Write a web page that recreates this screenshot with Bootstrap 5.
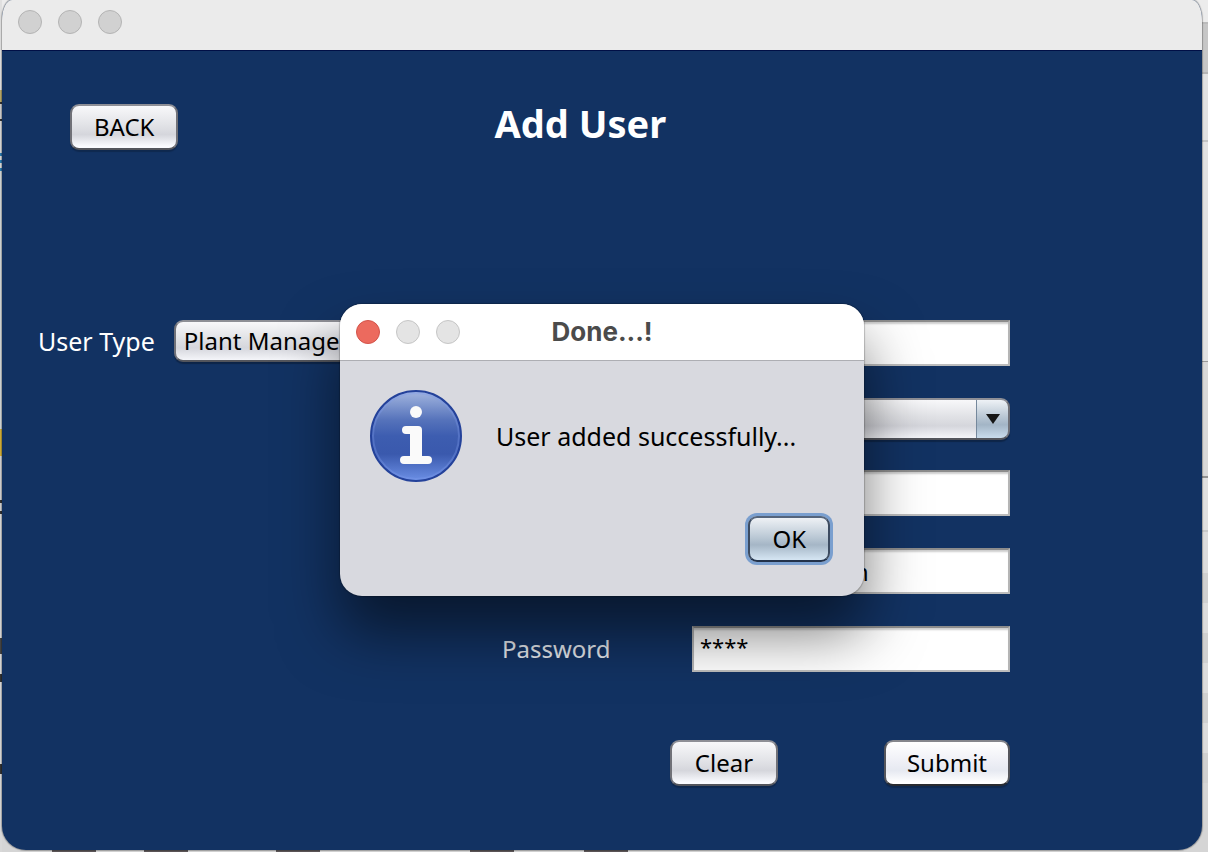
<!DOCTYPE html>
<html lang="en">
<head>
<meta charset="utf-8">
<meta name="viewport" content="width=device-width, initial-scale=1">
<title>Add User</title>
<link href="https://cdn.jsdelivr.net/npm/bootstrap@5.3.0/dist/css/bootstrap.min.css" rel="stylesheet">
<style>
body { font-family: "Noto Sans", "Open Sans", sans-serif; font-size: 24px; line-height: 32px; color: #000; }

/* Slivers of the windows lying behind the main one */
.backdrop {
  min-height: 100vh;
  padding: 0 6px 2px 2px;
  background:
    linear-gradient(#5d5759, #5d5759) 52px 100% / 44px 2px no-repeat,
    linear-gradient(#5d5759, #5d5759) 144px 100% / 44px 2px no-repeat,
    linear-gradient(#5d5759, #5d5759) 276px 100% / 44px 2px no-repeat,
    linear-gradient(#5d5759, #5d5759) 470px 100% / 44px 2px no-repeat,
    linear-gradient(#5d5759, #5d5759) 584px 100% / 44px 2px no-repeat,
    linear-gradient(#e0e0e0 90px, #b9a868 90px 102px, #333 102px 104px, #ccc 104px 119px, #333 119px 121px, #d8d8d8 121px 153px, #2a7ab0 153px 156px, #d8d8d8 156px 160px, #2a7ab0 160px 163px, #d8d8d8 163px 168px, #2a7ab0 168px 171px, #d0d5d5 171px 429px, #d0ae38 429px 456px, #d0d0d0 456px 500px, #333 500px 503px, #d0d0d0 503px 511px, #333 511px 514px, #d8d8d8 514px 638px, #444 638px 654px, #d8d8d8 654px 674px, #333 674px 682px, #d8d8d8 682px 764px, #333 764px 774px, #d8d8d8 774px) 0 0 / 2px 100% no-repeat,
    linear-gradient(#ececec 22px, #bbb 22px 24px, #c6c6c6 24px 72px, #b5b5b5 72px 74px, #e2e2e2 74px 140px, #c4c4c4 140px 142px, #e2e2e2 142px 361px, #999 361px 362px, #d8d8d8 362px 476px, #929292 476px 478px, #e0e0e0 478px 530px, #c9c9c9 530px 532px, #dcdcdc 532px 573px, #d0d0d0 573px 603px, #dcdcdc 603px 633px, #d0d0d0 633px 663px, #dcdcdc 663px 693px, #d0d0d0 693px 723px, #dcdcdc 723px 753px, #d0d0d0 753px 783px, #d5d5d5 783px);
}
.app-window { min-height: calc(100vh - 2px); background: #123262; border-radius: 10px 10px 24px 24px / 20px 20px 24px 24px; box-shadow: 0 0 1px 1px #0004; }
.title-strip { height: 51px; padding: 10px 16px; gap: 16px; background: #ebebeb; border-bottom: 1px solid #000f46; border-radius: 10px 10px 0 0 / 20px 20px 0 0; }
.light { width: 24px; height: 24px; border-radius: 50%; background: #d1d1d1; border: 1px solid #b4b4b4; }

.head-row { padding: 53px 192px 0 68px; height: 269px; gap: 316px; }
.page-title { font-size: 38px; line-height: 38px; font-weight: 700; }

.btn-nimbus {
  height: 46px; padding: 0 22px; border: 2px solid; border-color: #8e8f96 #707178 #53555c; border-radius: 9px;
  background: linear-gradient(#f8f8fa, #e2e3e7 45%, #d5d6dc 68%, #fafbff 96%);
  color: #000; font-size: 24px; line-height: 36px; box-shadow: 0 2px 1px #0003;
}
.btn-nimbus:hover { color: #000; border-color: #707178; }
.btn-wide { min-width: 108px; }
.btn-bright { padding: 0 21px; background: linear-gradient(#fff, #eff0f6 45%, #e6e9f1 68%, #fff 96%); border-color: #85868c #55565c #292b30; }
.btn-focus {
  background: linear-gradient(#eef1f5, #bfccd8 42%, #a5b6c6 64%, #d3e3f1 98%); border-color: #55657c #3c4b61 #22324a;
  box-shadow: 0 0 0 3px #7a9fcf;
}

.form-cols { display: grid; grid-template-columns: 464px 190px 1fr; grid-template-rows: 46px 40px 46px 46px 46px; padding: 0 192px 0 36px; row-gap: 32px; }
.wide-text { font-size: 25px; }
.type-field { gap: 19px; line-height: 42px; }
.text-cell {
  height: 46px; padding: 0 6px; border: 2px solid; border-color: #8c8c8c #b5b5b5 #bdbdbd; border-radius: 0; background: #fff;
  font-size: 24px; line-height: 36px; color: #000; box-shadow: inset 0 3px 2px -1px #0003;
}
.pass-cell { font-size: 22px; padding-bottom: 6px; }
.pass-label { color: #e3e7ec; line-height: 46px; }
.pick {
  height: 42px; padding: 0 40px 0 8px; border: 2px solid; border-color: #8e8f96 #707178 #53555c; border-radius: 9px;
  font-size: 24px; line-height: 36px; color: #000; box-shadow: 0 2px 1px #0004;
  background:
    url("data:image/svg+xml,%3Csvg xmlns='http://www.w3.org/2000/svg' viewBox='0 0 14 10'%3E%3Cpath d='M0 0h14L7 10z' fill='%23151515'/%3E%3C/svg%3E") right 8px top 14px / 14px 10px no-repeat,
    linear-gradient(#75889c, #75889c) right 31px top 0 / 1px 100% no-repeat,
    linear-gradient(#eef2f6, #b8c6d3 45%, #a3b5c6 65%, #c9dcec) right 0 top 0 / 31px 100% no-repeat,
    linear-gradient(#f8f8fa, #e0e1e5 45%, #d5d6dc 68%, #f4f5f9);
}
.pick-type { width: 228px; }
.action-row { padding: 68px 192px 64px 36px; gap: 106px; }
.stage { position: relative; }

/* Message box floating over the form */
.notice { position: absolute; top: 304px; left: 0; right: 0; width: 524px; margin: 0 auto; background: #d8d9df; border-radius: 22px; box-shadow: 0 0 1px 1px #0003, 0 36px 60px 0 #0008; }
.notice-bar { position: relative; height: 57px; padding: 0 16px; gap: 16px; background: #fff; border-bottom: 1px solid #adaeb3; border-radius: 22px 22px 0 0; }
.notice-bar .light { background: #e4e4e4; border-color: #c6c6c6; }
.notice-bar .light-red { background: #ec6a5e; border-color: #d3534a; }
.notice-title { position: absolute; left: 0; right: 0; text-align: center; font: 700 26px/32px Inter, sans-serif; color: #4b4b4b; }
.notice-body { padding: 29px 30px 0; gap: 34px; }
.notice-foot { padding: 34px 34px 34px 0; }
</style>
</head>
<body>
<div class="backdrop">
  <main class="app-window stage d-flex flex-column">
    <div class="title-strip d-flex">
      <span class="light"></span><span class="light"></span><span class="light"></span>
    </div>
    <header class="head-row d-flex align-items-start text-white">
      <button type="button" class="btn btn-nimbus btn-wide">BACK</button>
      <h1 class="page-title mb-0 text-nowrap">Add User</h1>
    </header>
    <form>
      <div class="form-cols">
        <div class="type-field d-flex align-items-start">
          <label for="type" class="wide-text text-white text-nowrap">User Type</label>
          <select id="type" class="form-select pick pick-type"><option>Plant Manager</option></select>
        </div>
        <span></span>
        <input class="form-control text-cell" aria-label="Name">
        <span></span><span></span>
        <select class="form-select pick" aria-label="Plant"><option></option></select>
        <span></span><span></span>
        <input class="form-control text-cell" aria-label="Phone">
        <span></span><span></span>
        <input class="form-control text-cell" aria-label="Email" value="jack@mail.com">
        <span></span>
        <label for="pass" class="pass-label">Password</label>
        <input id="pass" class="form-control text-cell pass-cell" value="****">
      </div>
      <div class="action-row d-flex justify-content-end">
        <button type="button" class="btn btn-nimbus btn-wide">Clear</button>
        <button type="button" class="btn btn-nimbus btn-bright">Submit</button>
      </div>
    </form>

    <section class="notice" role="dialog" aria-labelledby="notice-title">
      <div class="notice-bar d-flex align-items-center">
        <span class="light light-red"></span><span class="light"></span><span class="light"></span>
        <h2 id="notice-title" class="notice-title mb-0">Done...!</h2>
      </div>
      <div class="notice-body d-flex align-items-center">
        <svg width="92" height="92" viewBox="0 0 92 92" aria-hidden="true">
          <defs>
            <linearGradient id="orb" x1="0" y1="0" x2="0" y2="1">
              <stop offset="0" stop-color="#a4b7e0"/><stop offset=".32" stop-color="#5673bb"/>
              <stop offset=".5" stop-color="#3d5db0"/><stop offset=".7" stop-color="#3a59ad"/>
              <stop offset="1" stop-color="#6c90e6"/>
            </linearGradient>
          </defs>
          <circle cx="46" cy="46" r="45" fill="url(#orb)" stroke="#24429a" stroke-width="2"/>
          <circle cx="46" cy="46" r="43" fill="none" stroke="#7d9bea" stroke-opacity=".35" stroke-width="2"/>
          <circle cx="46" cy="22" r="6" fill="#fafafa"/>
          <path d="M36 36h12a4 4 0 0 1 4 4v26h6a4 4 0 0 1 0 8H34a4 4 0 0 1 0-8h6V44h-4a4 4 0 0 1 0-8z" fill="#fafafa"/>
        </svg>
        <p class="wide-text mb-0 text-nowrap">User added successfully...</p>
      </div>
      <div class="notice-foot d-flex justify-content-end">
        <button type="button" class="btn btn-nimbus btn-focus">OK</button>
      </div>
    </section>
  </main>
</div>
<script src="https://cdn.jsdelivr.net/npm/bootstrap@5.3.0/dist/js/bootstrap.bundle.min.js"></script>
</body>
</html>
